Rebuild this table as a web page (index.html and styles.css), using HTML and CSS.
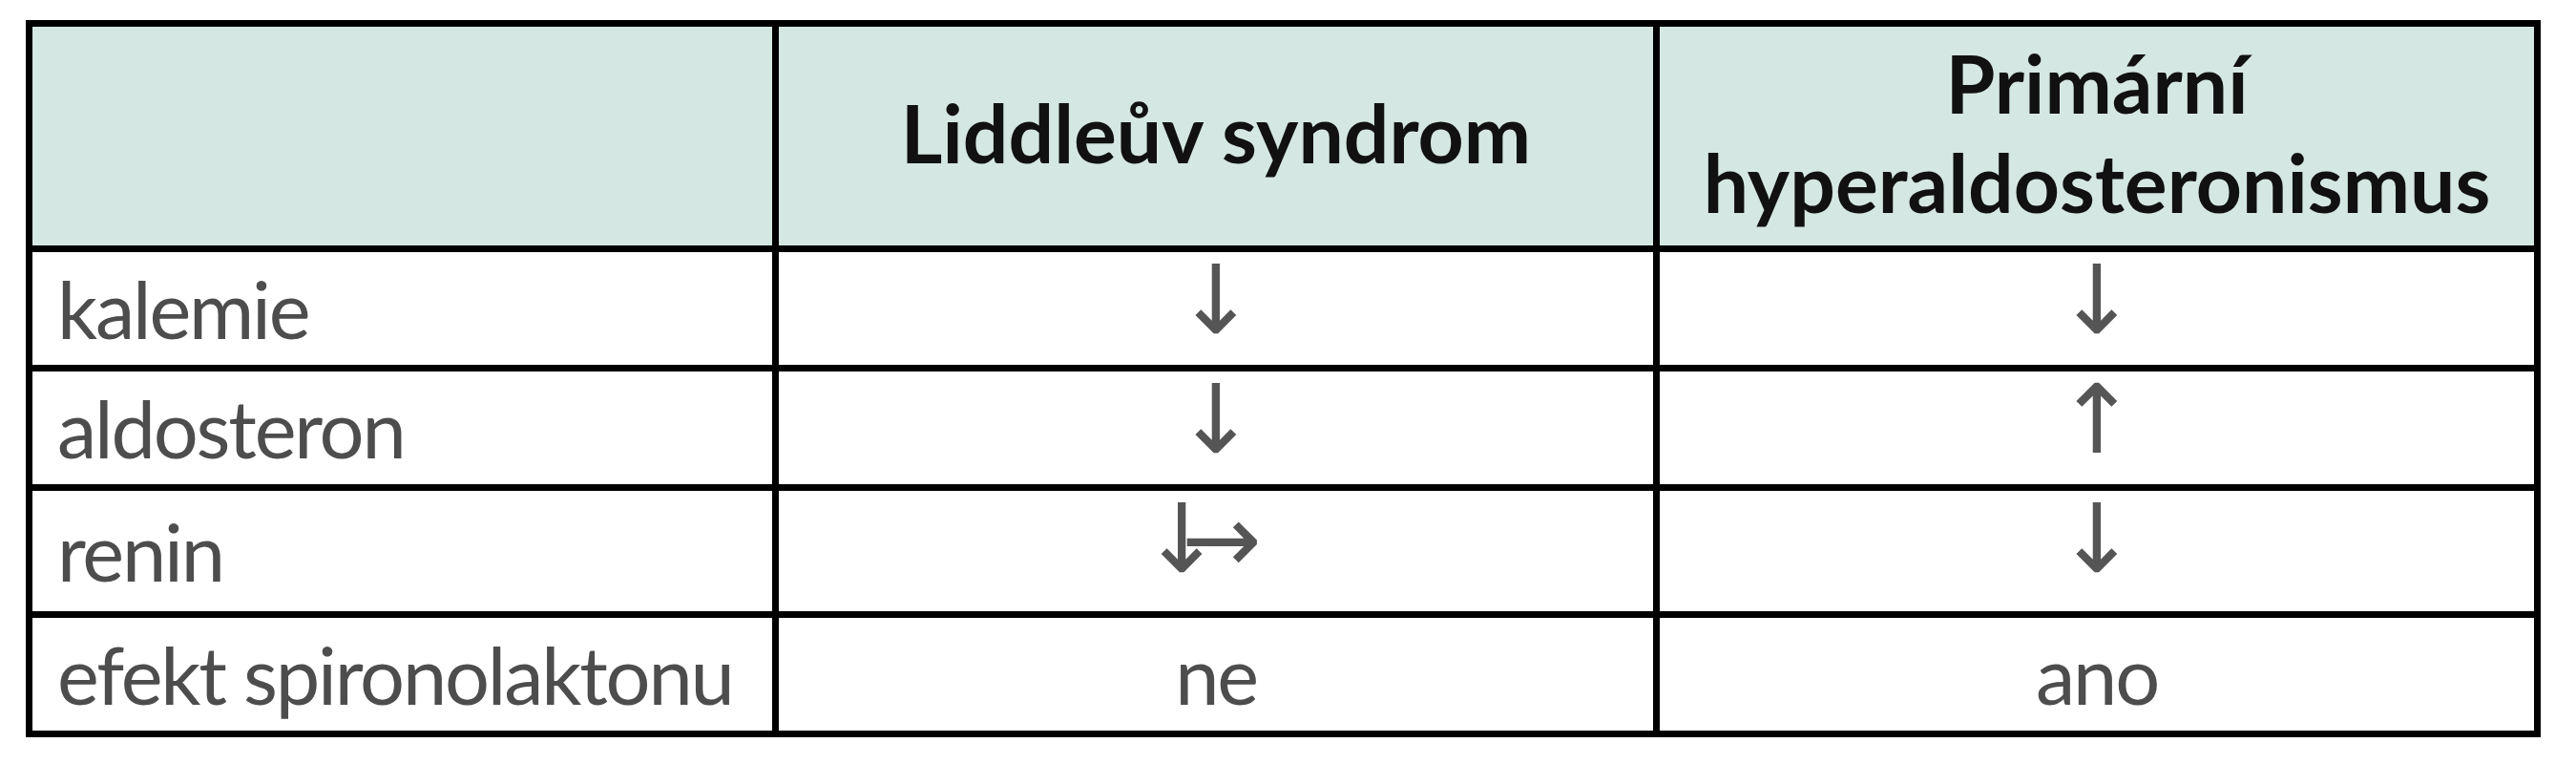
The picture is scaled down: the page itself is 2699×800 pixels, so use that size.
FILE: index.html
```html
<!DOCTYPE html>
<html lang="cs">
<head>
<meta charset="utf-8">
<title>Liddleův syndrom vs. primární hyperaldosteronismus</title>
<link rel="stylesheet" href="styles.css">
</head>
<body>
<table class="cmp">
  <thead>
    <tr class="row-head">
      <th class="c1"></th>
      <th class="c2">Liddleův syndrom</th>
      <th class="c3">Primární<br>hyperaldosteronismus</th>
    </tr>
  </thead>
  <tbody>
    <tr class="row-a">
      <td class="label">kalemie</td>
      <td class="val arrow"><span class="sym">↓</span></td>
      <td class="val arrow"><span class="sym">↓</span></td>
    </tr>
    <tr class="row-a">
      <td class="label">aldosteron</td>
      <td class="val arrow"><span class="sym">↓</span></td>
      <td class="val arrow"><span class="sym">↑</span></td>
    </tr>
    <tr class="row-b">
      <td class="label">renin</td>
      <td class="val arrow arrow-b"><span class="sym pair">↓→</span></td>
      <td class="val arrow arrow-b"><span class="sym">↓</span></td>
    </tr>
    <tr class="row-a">
      <td class="label">efekt spironolaktonu</td>
      <td class="val">ne</td>
      <td class="val">ano</td>
    </tr>
  </tbody>
</table>
</body>
</html>
```

FILE: styles.css
```css
html, body {
  margin: 0;
  padding: 0;
  background: #ffffff;
}

body {
  font-family: Lato, "Open Sans", "Liberation Sans", sans-serif;
}

.cmp {
  box-sizing: border-box;
  width: 2635px;
  margin: 21px 0 0 27px;
  table-layout: fixed;
  border-collapse: separate;
  border-spacing: 0;
  border-top: 7px solid #000;
  border-left: 7px solid #000;
}

.cmp th,
.cmp td {
  box-sizing: border-box;
  padding: 0;
  border-right: 7px solid #000;
  border-bottom: 7px solid #000;
  vertical-align: middle;
}

.c1 { width: 782px; }
.c2 { width: 923px; }
.c3 { width: 923px; }

.row-head { height: 236px; }
.row-a { height: 125px; }
.row-b { height: 133px; }

.cmp th {
  background: #d5e7e2;
  color: #111;
  font-weight: 700;
  font-size: 84px;
  line-height: 104px;
  text-align: center;
  padding-bottom: 8px;
}

.cmp td {
  color: #4d4d4d;
  font-size: 83px;
  line-height: 100px;
  letter-spacing: -2.2px;
}

.cmp .label {
  text-align: left;
  padding-left: 26px;
}

.cmp .val {
  text-align: center;
}

.cmp .arrow {
  line-height: 60px;
  padding-bottom: 14px;
}

.cmp .arrow-b {
  padding-bottom: 22px;
}

.sym {
  font-family: "DejaVu Sans", sans-serif;
  font-size: 100px;
  letter-spacing: 0;
  color: #555;
}

.sym.pair {
  letter-spacing: -0.42em;
  padding-right: 0.72em;
}
```
